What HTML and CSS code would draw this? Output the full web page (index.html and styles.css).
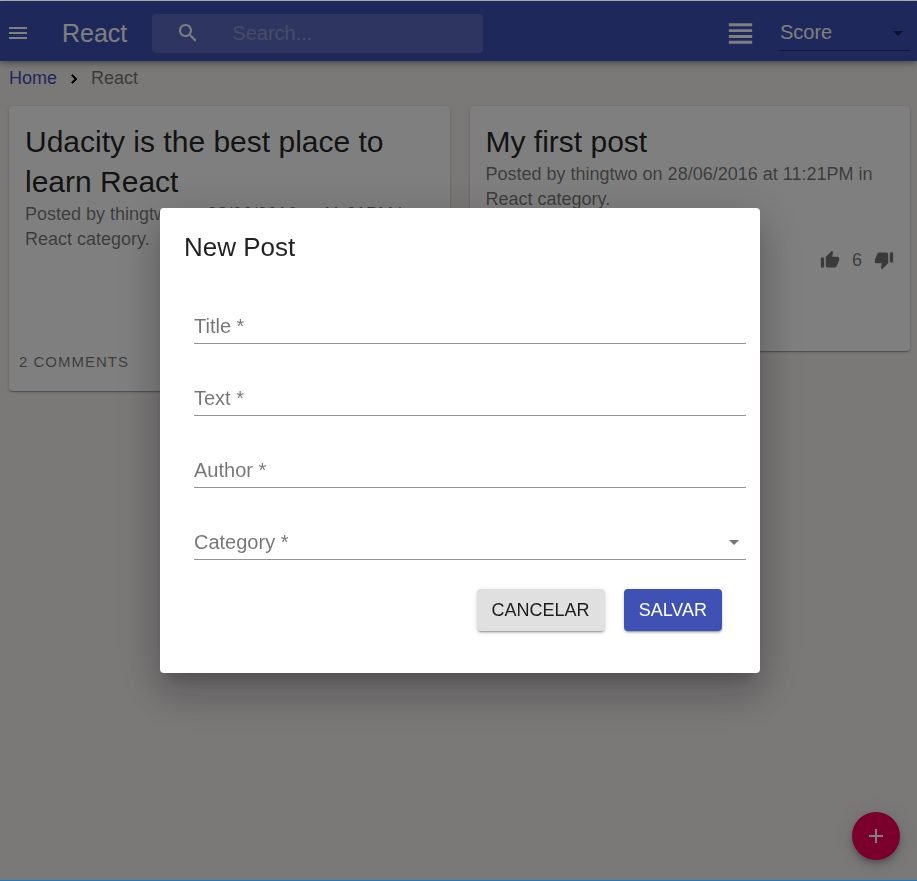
FILE: index.html
```html
<!DOCTYPE html>
<html lang="en">
<head>
<meta charset="utf-8">
<meta name="viewport" content="width=device-width, initial-scale=1">
<title>React</title>
<link rel="stylesheet" href="styles.css">
</head>
<body>
<div class="page">
  <header class="appbar">
    <button class="icon-button" type="button" aria-label="Menu">
      <svg class="icon" viewBox="0 0 24 24"><path d="M3 18h18v-2H3v2zm0-5h18v-2H3v2zm0-7v2h18V6H3z"/></svg>
    </button>
    <h1 class="appbar-title">React</h1>
    <div class="search">
      <svg class="icon" viewBox="0 0 24 24"><path d="M15.5 14h-.79l-.28-.27C15.41 12.59 16 11.11 16 9.5 16 5.91 13.09 3 9.5 3S3 5.91 3 9.5 5.91 16 9.5 16c1.61 0 3.09-.59 4.23-1.57l.27.28v.79l5 4.99L20.49 19l-4.99-5zm-6 0C7.01 14 5 11.99 5 9.5S7.01 5 9.5 5 14 7.01 14 9.5 11.99 14 9.5 14z"/></svg>
      <input class="search-input" type="search" placeholder="Search..." aria-label="Search">
    </div>
    <button class="icon-button view-button" type="button" aria-label="List view">
      <svg class="icon-large" viewBox="0 0 24 24"><path d="M4 15h16v-2H4v2zm0 4h16v-2H4v2zm0-8h16V9H4v2zm0-6v2h16V5H4z"/></svg>
    </button>
    <div class="sort">
      <select class="sort-select" aria-label="Sort by">
        <option>Score</option>
        <option>Date</option>
      </select>
      <svg class="icon select-arrow" viewBox="0 0 24 24"><path d="M7 10l5 5 5-5z"/></svg>
    </div>
  </header>

  <nav class="breadcrumb" aria-label="Breadcrumb">
    <a class="breadcrumb-link" href="#">Home</a>
    <svg class="chevron" viewBox="0 0 24 24"><path d="M10 6L8.590 7.410 13.170 12l-4.580 4.590L10 18l6-6z"/></svg>
    <span>React</span>
  </nav>

  <main class="posts">
    <article class="card">
      <h2 class="card-title">Udacity is the best place to learn React</h2>
      <p class="card-meta">Posted by thingtwo on 28/06/2016 at 11:21PM in React category.</p>
      <div class="votes">
        <button class="vote" type="button" aria-label="Vote up"><svg viewBox="0 0 24 24"><path d="M1 21h4V9H1v12zm22-11c0-1.100-.9-2-2-2h-6.310l.95-4.570.03-.32c0-.41-.17-.79-.44-1.060L14.170 1 7.590 7.590C7.220 7.950 7 8.450 7 9v10c0 1.100.9 2 2 2h9c.83 0 1.540-.5 1.840-1.220l3.020-7.050c.09-.23.14-.47.14-.73v-2z"/></svg></button>
        <span>6</span>
        <button class="vote" type="button" aria-label="Vote down"><svg viewBox="0 0 24 24"><path d="M15 3H6c-.83 0-1.540.5-1.840 1.220l-3.020 7.050c-.09.23-.14.47-.14.73v2c0 1.100.9 2 2 2h6.310l-.95 4.570-.03.32c0 .41.17.79.44 1.060L9.830 23l6.590-6.590c.36-.36.58-.86.58-1.410V5c0-1.100-.9-2-2-2zm4 0v12h4V3h-4z"/></svg></button>
      </div>
      <a class="comments" href="#">2 comments</a>
    </article>
    <article class="card">
      <h2 class="card-title">My first post</h2>
      <p class="card-meta">Posted by thingtwo on 28/06/2016 at 11:21PM in React category.</p>
      <div class="votes">
        <button class="vote" type="button" aria-label="Vote up"><svg viewBox="0 0 24 24"><path d="M1 21h4V9H1v12zm22-11c0-1.100-.9-2-2-2h-6.310l.95-4.570.03-.32c0-.41-.17-.79-.44-1.060L14.170 1 7.590 7.590C7.220 7.950 7 8.450 7 9v10c0 1.100.9 2 2 2h9c.83 0 1.540-.5 1.840-1.220l3.020-7.050c.09-.23.14-.47.14-.73v-2z"/></svg></button>
        <span>6</span>
        <button class="vote" type="button" aria-label="Vote down"><svg viewBox="0 0 24 24"><path d="M15 3H6c-.83 0-1.540.5-1.840 1.220l-3.020 7.050c-.09.23-.14.47-.14.73v2c0 1.100.9 2 2 2h6.310l-.95 4.570-.03.32c0 .41.17.79.44 1.060L9.830 23l6.590-6.590c.36-.36.58-.86.58-1.410V5c0-1.100-.9-2-2-2zm4 0v12h4V3h-4z"/></svg></button>
      </div>
    </article>
  </main>

  <button class="fab" type="button" aria-label="New post">
    <svg class="icon" viewBox="0 0 24 24"><path d="M19 13h-6v6h-2v-6H5v-2h6V5h2v6h6v2z"/></svg>
  </button>
</div>

<div class="overlay">
  <form class="dialog" role="dialog" aria-modal="true" aria-labelledby="dialog-title">
    <h2 class="dialog-title" id="dialog-title">New Post</h2>
    <div class="fields">
      <div class="field">
        <input class="field-control" id="title" type="text" required>
        <label class="field-label" for="title">Title *</label>
      </div>
      <div class="field">
        <input class="field-control" id="text" type="text" required>
        <label class="field-label" for="text">Text *</label>
      </div>
      <div class="field">
        <input class="field-control" id="author" type="text" required>
        <label class="field-label" for="author">Author *</label>
      </div>
      <div class="field">
        <select class="field-control" id="category" required>
          <option value=""></option>
        </select>
        <label class="field-label" for="category">Category *</label>
        <svg class="icon select-arrow" viewBox="0 0 24 24"><path d="M7 10l5 5 5-5z"/></svg>
      </div>
    </div>
    <div class="actions">
      <button class="button" type="button">CANCELAR</button>
      <button class="button button-primary" type="submit">SALVAR</button>
    </div>
  </form>
</div>
</body>
</html>
```
FILE: styles.css
```css
* {
  box-sizing: border-box;
}

body {
  margin: 0;
  font-family: "Liberation Sans", Arial, sans-serif;
  font-size: 18px;
  line-height: 25px;
  color: rgba(0, 0, 0, 0.87);
}

h1, h2, p {
  margin: 0;
  font-weight: 400;
}

button, input, select {
  margin: 0;
  padding: 0;
  border: 0;
  background: none;
  font: inherit;
  color: inherit;
  appearance: none;
  outline: 0;
}

svg {
  display: block;
  fill: currentColor;
}

.page {
  min-height: 100vh;
  background: #f6f0f1;
  border-top: 1px solid #b4b4b4;
  border-bottom: 1px solid #1a7bc4;
}

.icon {
  width: 24px;
  height: 24px;
}

.icon-large {
  width: 35px;
  height: 35px;
}

/* App bar */
.appbar {
  display: flex;
  align-items: center;
  height: 60px;
  padding: 4px 7px 0 6px;
  background: #3f51b5;
  color: #fff;
  box-shadow: 0 2px 4px -1px rgba(0, 0, 0, 0.2), 0 4px 5px rgba(0, 0, 0, 0.14), 0 1px 10px rgba(0, 0, 0, 0.12);
}

.appbar-title {
  margin: 0 25px 0 32px;
  font-size: 25px;
  line-height: 40px;
}

.search {
  display: flex;
  align-items: center;
  gap: 32px;
  width: 331px;
  height: 39px;
  padding-left: 24px;
  border-radius: 4px;
  background: rgba(255, 255, 255, 0.15);
}

.search-input {
  flex: 1;
  min-width: 0;
  font-size: 20px;
}

.search-input::placeholder {
  color: #fff;
  opacity: 0.3;
}

.view-button {
  margin: 0 22px 0 auto;
}

.sort {
  position: relative;
  width: 130px;
  border-bottom: 1px solid rgba(0, 0, 0, 0.42);
}

.sort-select {
  display: block;
  width: 100%;
  height: 34px;
  font-size: 20px;
}

.select-arrow {
  position: absolute;
  right: 0;
  bottom: 5px;
  color: rgba(0, 0, 0, 0.54);
  pointer-events: none;
}

/* Breadcrumb */
.breadcrumb {
  display: flex;
  align-items: center;
  gap: 8px;
  padding: 5px 9px 0;
  color: rgba(0, 0, 0, 0.54);
}

.breadcrumb-link {
  color: #3f51b5;
  text-decoration: none;
}

.chevron {
  width: 18px;
  height: 18px;
  color: #000;
  stroke: currentColor;
}

/* Posts */
.posts {
  display: grid;
  grid-template-columns: 1fr 1fr;
  align-items: start;
  gap: 20px;
  padding: 15px 7px 0 9px;
}

.card {
  display: flow-root;
  padding: 16px;
  border-radius: 4px;
  background: #fff;
  box-shadow: 0 1px 3px rgba(0, 0, 0, 0.2), 0 1px 1px rgba(0, 0, 0, 0.14), 0 2px 1px -1px rgba(0, 0, 0, 0.12);
}

.card-title {
  font-size: 30px;
  line-height: 40px;
}

.card-meta {
  color: rgba(0, 0, 0, 0.54);
}

.votes {
  display: flex;
  align-items: center;
  justify-content: flex-end;
  gap: 12px;
  height: 20px;
  margin: 38px 0 65px;
  color: rgba(0, 0, 0, 0.54);
}

.vote {
  width: 20px;
  height: 20px;
}

.comments {
  display: block;
  margin: -23px -6px 3px;
  font-size: 15px;
  line-height: 20px;
  letter-spacing: 1px;
  text-transform: uppercase;
  text-decoration: none;
  color: rgba(0, 0, 0, 0.54);
}

.fab {
  position: fixed;
  right: 17px;
  bottom: 21px;
  display: grid;
  place-items: center;
  width: 48px;
  height: 48px;
  border-radius: 50%;
  background: #f50057;
  color: #fff;
  box-shadow: 0 3px 5px -1px rgba(0, 0, 0, 0.2), 0 6px 10px rgba(0, 0, 0, 0.14), 0 1px 18px rgba(0, 0, 0, 0.12);
}

/* Dialog */
.overlay {
  position: fixed;
  inset: 1px 0;
  display: flex;
  align-items: center;
  justify-content: center;
  padding-left: 3px;
  background: rgba(0, 0, 0, 0.5);
}

.dialog {
  width: 600px;
  max-width: 100%;
  padding: 19px 0 42px;
  border-radius: 4px;
  background: #fff;
  box-shadow: 0 11px 15px -7px rgba(0, 0, 0, 0.2), 0 24px 38px 3px rgba(0, 0, 0, 0.14), 0 9px 46px 8px rgba(0, 0, 0, 0.12);
}

.dialog-title {
  padding: 0 24px;
  font-size: 26px;
  line-height: 40px;
}

.fields {
  display: grid;
  gap: 35px;
  padding: 40px 14px 29px 34px;
}

.field {
  position: relative;
  border-bottom: 1px solid rgba(0, 0, 0, 0.42);
}

.field-control {
  display: block;
  width: 100%;
  height: 36px;
  font-size: 20px;
}

.field-label {
  position: absolute;
  left: 0;
  bottom: 4px;
  font-size: 20px;
  color: rgba(0, 0, 0, 0.54);
  pointer-events: none;
}

.actions {
  display: flex;
  justify-content: flex-end;
  gap: 19px;
  padding: 0 38px;
}

.button {
  padding: 6px 15px;
  border-radius: 4px;
  line-height: 30px;
  background: #e0e0e0;
  box-shadow: 0 3px 1px -2px rgba(0, 0, 0, 0.2), 0 2px 2px rgba(0, 0, 0, 0.14), 0 1px 5px rgba(0, 0, 0, 0.12);
}

.button-primary {
  background: #3f51b5;
  color: #fff;
}
```
